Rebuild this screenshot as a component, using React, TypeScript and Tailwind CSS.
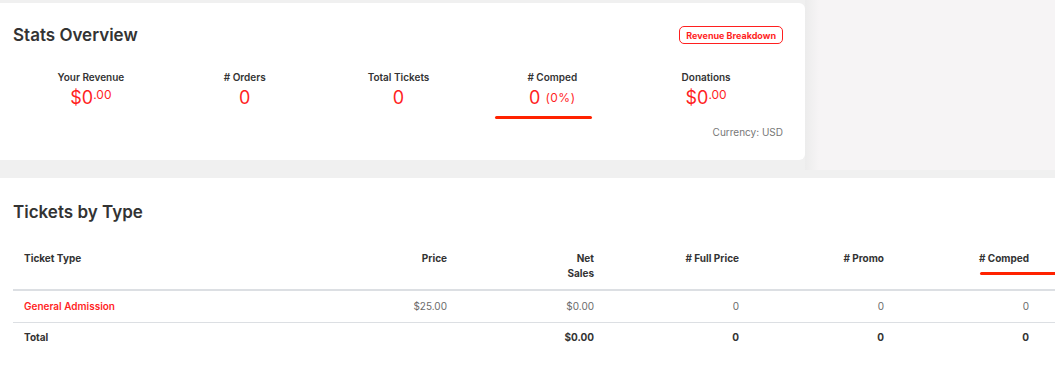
import React from "react";

const RED = "text-[#ff1f1f]";

function Money({ whole, cents }: { whole: string; cents: string }) {
  return (
    <span className={`${RED} text-[18px] leading-6`}>
      {whole}
      <span className="text-[12px] align-top relative top-[-3px]">.{cents}</span>
    </span>
  );
}

function Stat({
  label,
  children,
  underline,
}: {
  label: string;
  children: React.ReactNode;
  underline?: boolean;
}) {
  return (
    <div className="flex flex-col items-center">
      <div className="text-[10px] leading-[14px] font-semibold text-[#333]">{label}</div>
      <div className="mt-[2px] h-6 flex items-start">{children}</div>
      {underline && (
        <div className="self-start ml-[20px] mt-[6px] w-[97px] h-[3px] rounded-full bg-[#ff2200]" />
      )}
    </div>
  );
}

const rows = [
  { type: "General Admission", price: "$25.00", net: "$0.00", full: "0", promo: "0", comped: "0" },
];

export default function App() {
  return (
    <div
      className="w-[1055px] h-[368px] overflow-hidden bg-white"
      style={{ fontFamily: "Inter, 'Noto Sans', sans-serif" }}
    >
      <div className="flex bg-[#f0f0f0] h-[178px]">
        <div className="pt-[3px]">
          <div className="w-[805px] h-[157px] bg-white rounded-r-md pl-[13px] pr-[22px] pt-5">
            <div className="flex items-center justify-between h-6">
              <h2 className="text-[17px] leading-6 font-semibold text-[#333]">Stats Overview</h2>
              <button className="h-[18px] px-[6px] border border-[#ff1f1f] rounded-[5px] text-[9px] font-bold text-[#ff1f1f] leading-none">
                Revenue Breakdown
              </button>
            </div>
            <div className="grid grid-cols-5 mt-[23px] ml-px">
              <Stat label="Your Revenue">
                <Money whole="$0" cents="00" />
              </Stat>
              <Stat label="# Orders">
                <span className={`${RED} text-[18px] leading-6`}>0</span>
              </Stat>
              <Stat label="Total Tickets">
                <span className={`${RED} text-[18px] leading-6`}>0</span>
              </Stat>
              <Stat label="# Comped" underline>
                <span className={`${RED} text-[18px] leading-6`}>0</span>
                <span className={`${RED} text-[12px] leading-6 ml-[5px] tracking-[0.5px]`}>(0%)</span>
              </Stat>
              <Stat label="Donations">
                <Money whole="$0" cents="00" />
              </Stat>
            </div>
            <div className="text-right text-[10px] text-[#777] mt-[6px] leading-[14px]">Currency: USD</div>
          </div>
        </div>
        <div className="flex-1 h-[170px] bg-[linear-gradient(to_right,#ececec,#f6f4f5_14px)]" />
      </div>

      <div className="pl-[13px] pt-[22px]">
        <h2 className="text-[17px] leading-6 font-semibold text-[#333]">Tickets by Type</h2>
        <table className="table-fixed w-[1060px] mt-4 text-[10px] leading-[15px] border-collapse">
          <colgroup>
            <col className="w-[300px]" />
            <col className="w-[146px]" />
            <col className="w-[147px]" />
            <col className="w-[145px]" />
            <col className="w-[145px]" />
            <col className="w-[145px]" />
            <col />
          </colgroup>
          <thead>
            <tr className="border-b-2 border-[#dcdfe3] font-semibold text-[#333] align-top">
              <th className="text-left pl-[11px] pt-[11px] pb-[8px]">Ticket Type</th>
              <th className="text-right pr-3 pt-[11px] pb-[8px]">Price</th>
              <th className="text-right pr-3 pt-[11px] pb-[8px]">
                Net
                <br />
                Sales
              </th>
              <th className="text-right pr-3 pt-[11px] pb-[8px]"># Full Price</th>
              <th className="text-right pr-3 pt-[11px] pb-[8px]"># Promo</th>
              <th className="text-right pr-3 pt-[11px] pb-[8px] relative">
                # Comped
                <div className="absolute left-[84px] top-[32px] w-[100px] h-[3px] rounded-full bg-[#ff2200]" />
              </th>
              <th />
            </tr>
          </thead>
          <tbody>
            {rows.map((r) => (
              <tr key={r.type} className="border-b border-[#dcdfe3] text-[#6b6b6b]">
                <td className="pl-[11px] py-2 font-semibold text-[#ff1f1f]">{r.type}</td>
                <td className="text-right pr-3 py-2">{r.price}</td>
                <td className="text-right pr-3 py-2">{r.net}</td>
                <td className="text-right pr-3 py-2">{r.full}</td>
                <td className="text-right pr-3 py-2">{r.promo}</td>
                <td className="text-right pr-3 py-2">{r.comped}</td>
                <td />
              </tr>
            ))}
            <tr className="font-bold text-[#333]">
              <td className="pl-[11px] py-[7px]">Total</td>
              <td className="text-right pr-3 py-[7px]" />
              <td className="text-right pr-3 py-[7px]">$0.00</td>
              <td className="text-right pr-3 py-[7px]">0</td>
              <td className="text-right pr-3 py-[7px]">0</td>
              <td className="text-right pr-3 py-[7px]">0</td>
              <td />
            </tr>
          </tbody>
        </table>
      </div>
    </div>
  );
}
